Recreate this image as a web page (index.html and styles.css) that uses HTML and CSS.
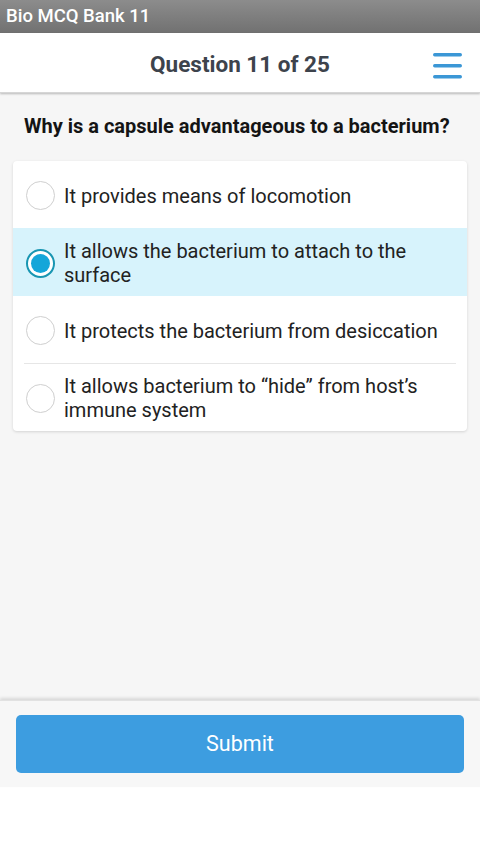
FILE: index.html
```html
<!DOCTYPE html>
<html>
<head>
<meta charset="utf-8">
<link rel="stylesheet" href="styles.css">
</head>
<body>
<div class="app">
  <div class="titlebar">Bio MCQ Bank 11</div>
  <div class="header">
    <div class="header-title">Question 11 of 25</div>
    <svg class="menu" width="30" height="27" viewBox="0 0 30 27">
      <rect x="0" y="1" width="29" height="3.4" rx="1.7" fill="#3b97d6"/>
      <rect x="0" y="12" width="29" height="3.4" rx="1.7" fill="#3b97d6"/>
      <rect x="0" y="23" width="29" height="3.4" rx="1.7" fill="#3b97d6"/>
    </svg>
  </div>
  <div class="content">
    <div class="question">Why is a capsule advantageous to a bacterium?</div>
    <div class="card">
      <div class="option">
        <span class="radio"></span>
        <span class="label">It provides means of locomotion</span>
      </div>
      <div class="option selected">
        <span class="radio"><span class="dot"></span></span>
        <span class="label">It allows the bacterium to attach to the surface</span>
      </div>
      <div class="option">
        <span class="radio"></span>
        <span class="label">It protects the bacterium from desiccation</span>
      </div>
      <div class="option sep">
        <span class="radio"></span>
        <span class="label">It allows bacterium to “hide” from host’s immune system</span>
      </div>
    </div>
  </div>
  <div class="footer">
    <button class="submit">Submit</button>
  </div>
  <div class="bottom"></div>
</div>
</body>
</html>
```
FILE: styles.css
```css
* { box-sizing: border-box; }
html, body { margin: 0; padding: 0; }
body {
  font-family: Roboto, "Noto Sans", sans-serif;
  background: #ffffff;
}
.app {
  width: 480px;
  height: 854px;
  display: flex;
  flex-direction: column;
  overflow: hidden;
}
.titlebar {
  height: 33px;
  background: linear-gradient(#8c8c8c, #717171);
  color: #ffffff;
  font-size: 18.5px;
  font-weight: 500;
  padding-left: 6px;
  line-height: 33px;
}
.header {
  height: 60px;
  background: #ffffff;
  display: flex;
  align-items: center;
  justify-content: center;
  position: relative;
  box-shadow: 0 1px 2px rgba(0,0,0,0.25);
  border-bottom: 1px solid #d6d6d6;
  z-index: 2;
}
.header-title {
  font-size: 22.5px;
  font-weight: 700;
  color: #3d434c;
  margin-top: 2px;
}
.menu {
  position: absolute;
  right: 17px;
  top: 19px;
}
.content {
  flex: 1;
  background: #f6f6f6;
  padding: 22px 13px 0 13px;
}
.question {
  font-size: 20px;
  font-weight: 700;
  color: #141414;
  line-height: 22px;
  padding-left: 11px;
  margin-bottom: 24px;
  white-space: nowrap;
}
.card {
  background: #ffffff;
  border-radius: 4px;
  box-shadow: 0 1px 3px rgba(0,0,0,0.14);
  overflow: hidden;
}
.option {
  min-height: 67px;
  display: flex;
  align-items: center;
  gap: 9px;
  padding: 11px 13px 9px 13px;
  position: relative;
}
.option.selected {
  background: #d7f3fc;
  min-height: 68px;
}
.option.sep::before {
  content: "";
  position: absolute;
  left: 11px;
  right: 11px;
  top: 0;
  border-top: 1px solid #e6e6e6;
}
.radio {
  width: 29px;
  height: 29px;
  flex: none;
  border-radius: 50%;
  border: 1.5px solid #cfcfcf;
  display: flex;
  align-items: center;
  justify-content: center;
  background: #ffffff;
}
.selected .radio {
  border: 2px solid #1996b2;
}
.dot {
  width: 19px;
  height: 19px;
  border-radius: 50%;
  background: #14a6d9;
}
.label {
  font-size: 20px;
  color: #222;
  line-height: 24px;
}
.footer {
  height: 87px;
  background: #f7f7f7;
  padding: 14px 16px 0 16px;
  box-shadow: 0 -2px 3px rgba(0,0,0,0.12);
  border-top: 1px solid #e2e2e2;
  position: relative;
}
.submit {
  width: 100%;
  height: 58px;
  background: #3d9de0;
  border: none;
  border-radius: 5px;
  color: #ffffff;
  font-family: Roboto, "Noto Sans", sans-serif;
  font-size: 21.5px;
  padding-bottom: 3px;
}
.bottom {
  height: 67px;
  background: #ffffff;
}
```
